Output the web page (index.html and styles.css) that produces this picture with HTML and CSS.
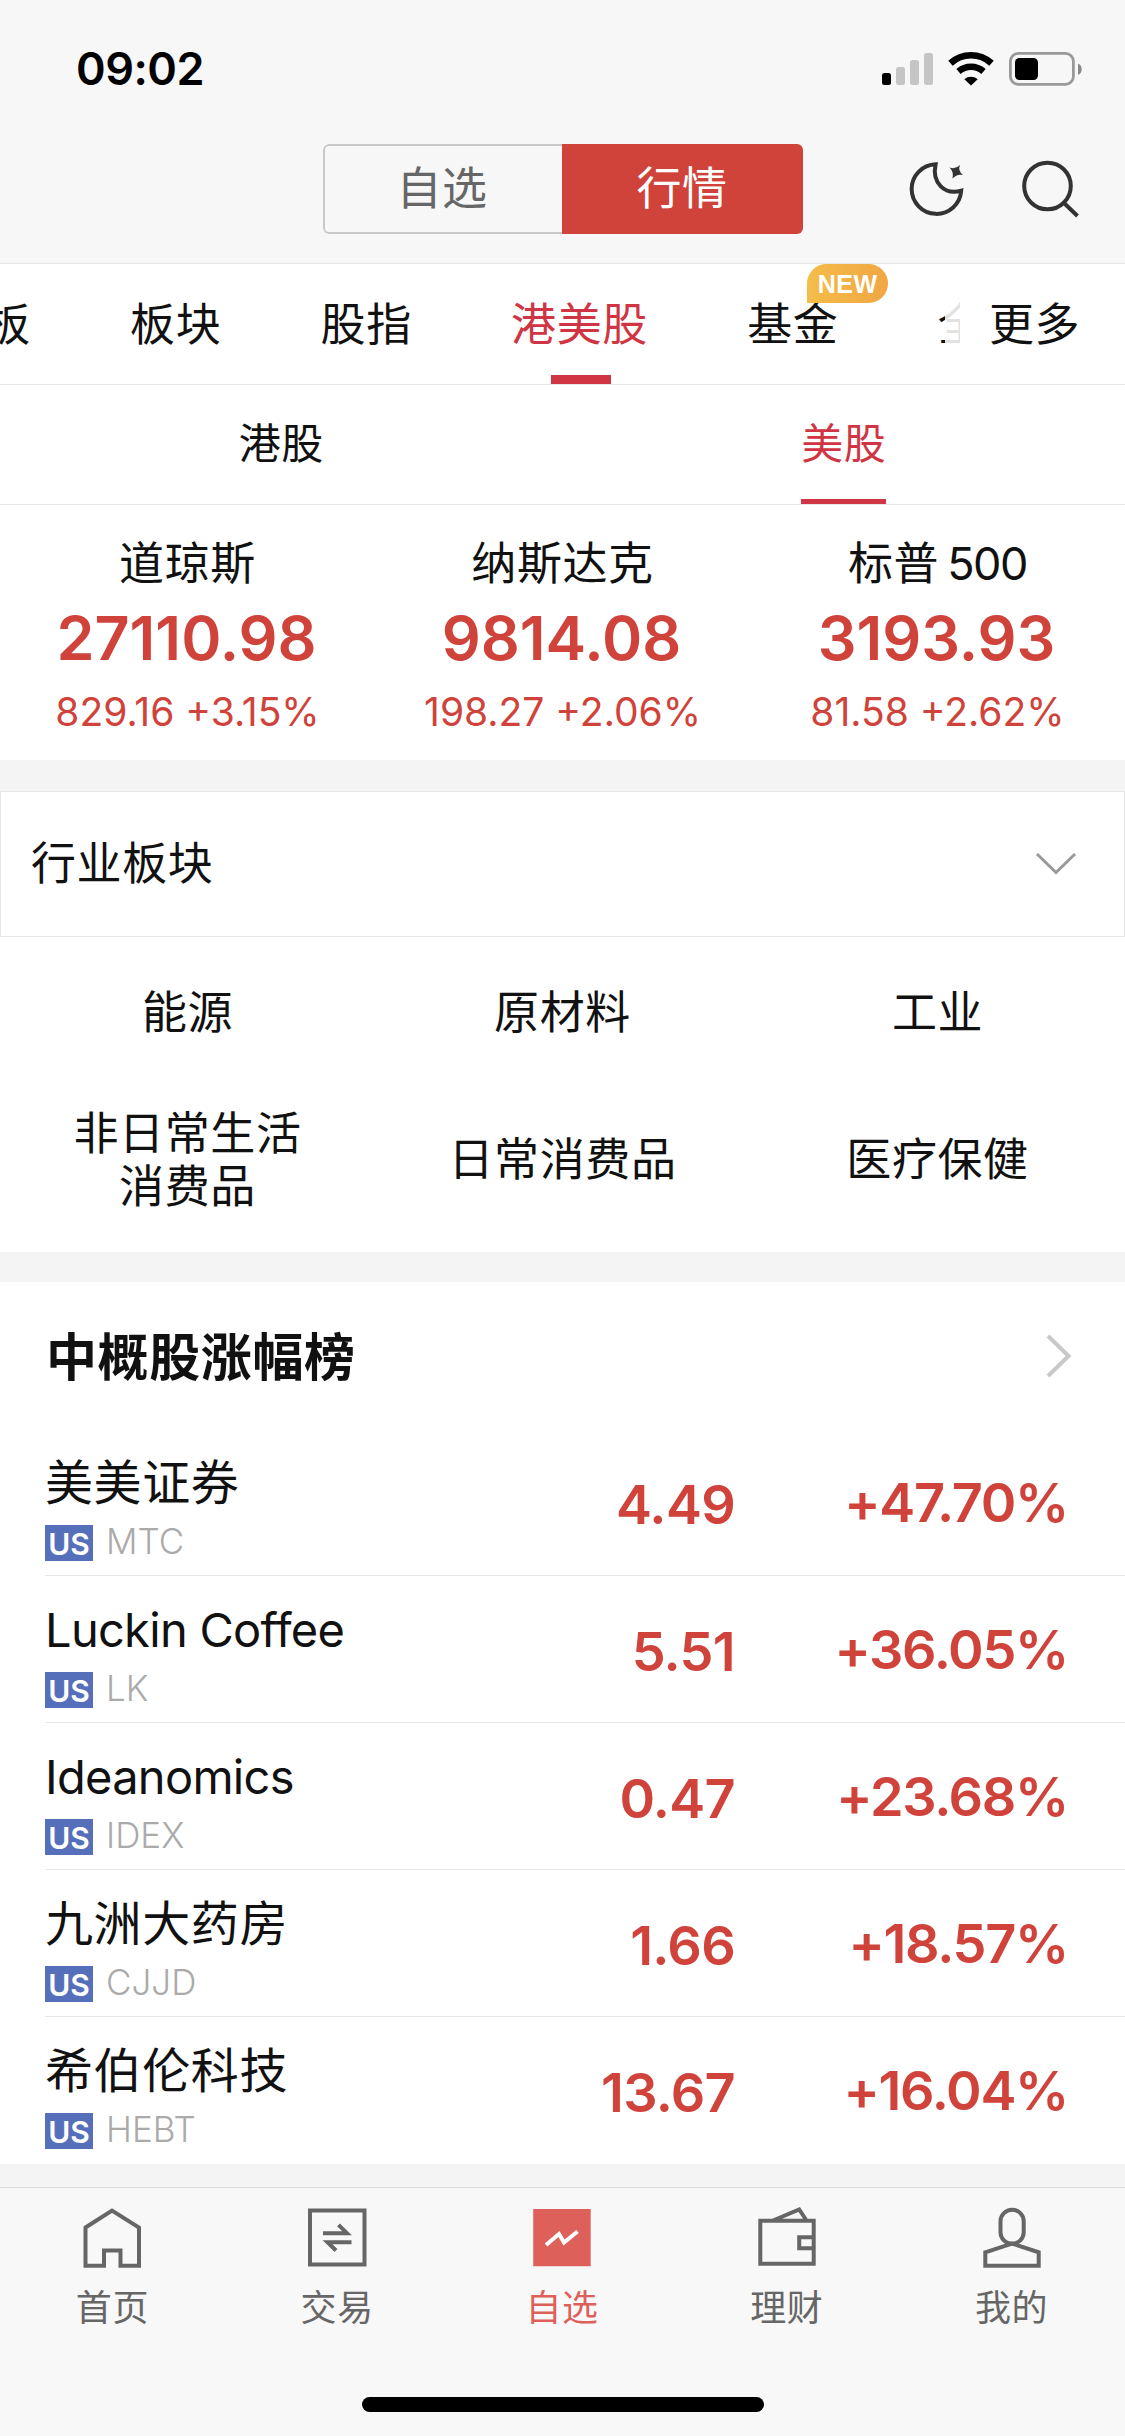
FILE: index.html
```html
<!DOCTYPE html>
<html lang="zh-CN">
<head>
<meta charset="utf-8">
<title>行情</title>
<link rel="stylesheet" href="styles.css">
</head>
<body>
<div class="app">
  <header class="header">
    <div class="status">
      <span class="clock">09:02</span>
      <svg class="status-icons" width="204" height="36" viewBox="0 0 204 36">
        <rect x="2" y="22" width="9" height="12" rx="2.5"/>
        <g fill="#c5c5c5">
          <rect x="16" y="16" width="9" height="18" rx="2.5"/>
          <rect x="30" y="9" width="9" height="25" rx="2.5"/>
          <rect x="44" y="2" width="9" height="32" rx="2.5"/>
        </g>
        <g fill="none" stroke="#000" stroke-width="6.6">
          <path d="M70.500 12.200A30.500 30.500 0 0 1 111.500 12.200"/>
          <path d="M78.500 20.500A19 19 0 0 1 103.500 20.500"/>
        </g>
        <path d="M84.300 28.200A10.500 10.500 0 0 1 97.700 28.200L91 34.500Z"/>
        <rect x="130.400" y="2.400" width="63" height="31" rx="8" fill="none" stroke="#999" stroke-width="2.800"/>
        <rect x="135" y="7" width="23" height="22" rx="4.500"/>
        <path d="M198 12.500c5 2 5 9.500 0 11.500z" fill="#8a8a8a"/>
      </svg>
    </div>
    <div class="toolbar">
      <div class="segment">
        <span class="segment-item">自选</span>
        <span class="segment-item segment-item-active">行情</span>
      </div>
      <div class="tools">
        <svg width="58" height="58" viewBox="0 0 58 58">
          <path d="M26.600 4.300A24.800 24.800 0 1 0 52.200 30.700C36 35.500 22.500 23 26.600 4.300Z" fill="none" stroke="#333" stroke-width="4"/>
          <path d="M40.500 7.500Q46 10 51 5Q48.500 10.500 54 15Q48 13.500 43.500 18.500Q45 12 40.500 7.500Z" fill="#333"/>
        </svg>
        <svg width="58" height="58" viewBox="0 0 58 58">
          <g fill="none" stroke="#333" stroke-width="4">
            <circle cx="26.500" cy="26" r="23.300"/>
            <path d="M43 43L56.500 56"/>
          </g>
        </svg>
      </div>
    </div>
  </header>

  <nav class="tabs">
    <div class="tabs-scroll">
      <span class="tab">中小板</span>
      <span class="tab">板块</span>
      <span class="tab">股指</span>
      <span class="tab tab-active">港美股</span>
      <span class="tab">基金<i class="badge-new">NEW</i></span>
      <span class="tab">全</span>
    </div>
    <span class="tabs-more">更多</span>
  </nav>

  <nav class="subtabs">
    <div class="subtab"><span class="subtab-label">港股</span></div>
    <div class="subtab"><span class="subtab-label subtab-active">美股</span></div>
  </nav>

  <section class="indices">
    <div class="index"><div class="index-name">道琼斯</div><div class="index-value">27110.98</div><div class="index-change">829.16 +3.15%</div></div>
    <div class="index"><div class="index-name">纳斯达克</div><div class="index-value">9814.08</div><div class="index-change">198.27 +2.06%</div></div>
    <div class="index"><div class="index-name">标普<span>500</span></div><div class="index-value">3193.93</div><div class="index-change">81.58 +2.62%</div></div>
  </section>

  <section class="sectors">
    <div class="sectors-head">
      <span>行业板块</span>
      <svg width="44" height="26" viewBox="0 0 44 26"><path d="M3 3L22 21.500L41 3" fill="none" stroke="#999" stroke-width="3"/></svg>
    </div>
    <div class="sectors-grid">
      <span>能源</span><span>原材料</span><span>工业</span>
      <span>非日常生活<br>消费品</span><span>日常消费品</span><span>医疗保健</span>
    </div>
  </section>

  <section class="rank">
    <div class="rank-head">
      <h2 class="rank-title">中概股涨幅榜</h2>
      <svg width="28" height="46" viewBox="0 0 28 46"><path d="M3 3L23.500 23L3 43" fill="none" stroke="#c8c8c8" stroke-width="4"/></svg>
    </div>
    <div class="stock"><div class="stock-id"><div class="stock-name">美美证券</div><div class="stock-code"><b class="market">US</b>MTC</div></div><span class="price">4.49</span><span class="percent">+47.70%</span></div>
    <div class="stock"><div class="stock-id"><div class="stock-name stock-name-latin">Luckin Coffee</div><div class="stock-code"><b class="market">US</b>LK</div></div><span class="price">5.51</span><span class="percent">+36.05%</span></div>
    <div class="stock"><div class="stock-id"><div class="stock-name stock-name-latin">Ideanomics</div><div class="stock-code"><b class="market">US</b>IDEX</div></div><span class="price">0.47</span><span class="percent">+23.68%</span></div>
    <div class="stock"><div class="stock-id"><div class="stock-name">九洲大药房</div><div class="stock-code"><b class="market">US</b>CJJD</div></div><span class="price">1.66</span><span class="percent">+18.57%</span></div>
    <div class="stock"><div class="stock-id"><div class="stock-name">希伯伦科技</div><div class="stock-code"><b class="market">US</b>HEBT</div></div><span class="price">13.67</span><span class="percent">+16.04%</span></div>
  </section>

  <footer class="tabbar">
    <div class="tabbar-items">
      <div class="tabbar-item">
        <svg width="60" height="62" viewBox="0 0 60 62"><path d="M3.500 20.500L30 3.500L57 20.500V58.800H38.500V43.500H22V58.800H3.500Z" fill="none" stroke="#666" stroke-width="4"/></svg>
        <span>首页</span>
      </div>
      <div class="tabbar-item">
        <svg width="60" height="62" viewBox="0 0 60 62"><path d="M3 3.500H57.500V57.500H3ZM16 26.200H40L31.500 17.800M44.500 35.200H20.500L29 43.500" fill="none" stroke="#666" stroke-width="4"/></svg>
        <span>交易</span>
      </div>
      <div class="tabbar-item tabbar-item-active">
        <svg width="60" height="62" viewBox="0 0 60 62"><path d="M1.200 2H58.700V59.300H1.200Z" fill="#de605b"/><path d="M14 38L27 27L32 35.500L45.500 24.500" fill="none" stroke="#fff" stroke-width="4"/></svg>
        <span>自选</span>
      </div>
      <div class="tabbar-item">
        <svg width="60" height="62" viewBox="0 0 60 62"><path d="M3.300 13.800H56.700V56.800H3.300ZM56.700 30.200H42.200V41.200H56.700M16 13.500L42.200 2.500L49.500 13.500" fill="none" stroke="#666" stroke-width="4"/></svg>
        <span>理财</span>
      </div>
      <div class="tabbar-item">
        <svg width="60" height="62" viewBox="0 0 60 62"><rect x="18.500" y="2.800" width="23.200" height="34" rx="11.600" fill="none" stroke="#666" stroke-width="4"/><path d="M3.300 45.300L30 36.500L56.700 45.300V58.800H3.300Z" fill="none" stroke="#666" stroke-width="4"/></svg>
        <span>我的</span>
      </div>
    </div>
    <div class="home-indicator"></div>
  </footer>
</div>
</body>
</html>
```
FILE: styles.css
```css
* { box-sizing: border-box; }

body {
  margin: 0;
  background: #f4f4f4;
  color: #111;
  font-family: Inter, "Noto Sans CJK SC", sans-serif;
  font-size: 45px;
  letter-spacing: 0.6px;
}

svg { display: block; flex: none; }

.app {
  width: 1125px;
  height: 2436px;
  display: flex;
  flex-direction: column;
  overflow: hidden;
}

/* Header */
.header {
  height: 264px;
  background: #f7f7f7;
  border-bottom: 1px solid #e6e6e6;
}
.status {
  height: 144px;
  padding: 0 41px 0 76px;
  display: flex;
  justify-content: space-between;
}
.clock {
  margin-top: 39px;
  line-height: 60px;
  font-weight: 600;
  color: #000;
  letter-spacing: -0.5px;
}
.status-icons { margin-top: 51px; }
.toolbar {
  height: 90px;
  padding: 0 46px 0 323px;
  display: flex;
  justify-content: space-between;
  align-items: center;
}
.segment {
  width: 480px;
  height: 90px;
  display: grid;
  grid-template-columns: 239px 241px;
  border-radius: 6px;
  overflow: hidden;
}
.segment-item {
  padding-right: 3px;
  text-align: center;
  line-height: 86px;
  color: #666;
  border: 2px solid #c8c8ca;
  border-right: 0;
  border-radius: 6px 0 0 6px;
}
.segment-item-active {
  padding-right: 1px;
  line-height: 90px;
  background: #cf433b;
  border: 0;
  border-radius: 0;
  color: #fff;
}
.tools { display: flex; gap: 54px; }

/* Category tabs */
.tabs {
  height: 121px;
  display: flex;
  background: #fff;
  border-bottom: 1px solid #e6e6e6;
}
.tabs-scroll {
  width: 960px;
  display: flex;
  justify-content: flex-start;
  gap: 99.300px;
  overflow: hidden;
  position: relative;
  white-space: nowrap;
}
.tabs-scroll::after {
  content: "";
  position: absolute;
  top: 0;
  right: 0;
  width: 15px;
  height: 100%;
  background: rgba(255, 255, 255, 0.88);
}
.tab {
  flex: none;
  position: relative;
  height: 120px;
  line-height: 122px;
}
.tab:first-child { margin-left: -106px; }
.tab-active { color: #d03543; }
.tab-active::after {
  content: "";
  position: absolute;
  left: 50%;
  bottom: 0;
  width: 60px;
  height: 9px;
  margin-left: -29px;
  background: #d03543;
}
.badge-new {
  position: absolute;
  left: 60px;
  top: 0;
  width: 81px;
  height: 39px;
  border-radius: 20px 20px 20px 0;
  background: linear-gradient(90deg, #f4bd48, #f0a644);
  color: #fff;
  font: bold 25px/40px "Liberation Sans", sans-serif;
  letter-spacing: 0.6px;
  text-align: center;
}
.tabs-more {
  flex: 1;
  padding-left: 29px;
  line-height: 122px;
}

/* Market tabs */
.subtabs {
  height: 120px;
  display: flex;
  background: #fff;
  border-bottom: 1px solid #e6e6e6;
  font-size: 42px;
}
.subtab {
  flex: 1;
  display: flex;
  justify-content: center;
}
.subtab-label { line-height: 117px; height: 119px; }
.subtab-active {
  color: #d03543;
  border-bottom: 5px solid #d03543;
}

/* Indices */
.indices {
  height: 255px;
  padding-top: 23px;
  display: flex;
  background: #fff;
  text-align: center;
}
.index { flex: 1; white-space: nowrap; }
.index-name { line-height: 71px; }
.index-name span { margin-left: 8px; letter-spacing: -1.4px; }
.index-value {
  padding-right: 2px;
  line-height: 79px;
  font-size: 61px;
  font-weight: 600;
  color: #cf433b;
  letter-spacing: 0;
}
.index-change {
  line-height: 68px;
  font-size: 39px;
  color: #cf433b;
  letter-spacing: 0;
}

/* Sectors */
.sectors { margin-top: 31px; background: #fff; }
.sectors-head {
  height: 146px;
  padding: 0 46px 0 30px;
  display: flex;
  align-items: center;
  justify-content: space-between;
  border: 1px solid #e6e6e6;
}
.sectors-head span { line-height: 60px; }
.sectors-grid {
  display: grid;
  grid-template-columns: repeat(3, 1fr);
  grid-auto-rows: 147px;
  align-items: center;
  padding: 2px 0 19px;
  text-align: center;
  line-height: 53px;
}

/* Ranking */
.rank { margin-top: 30px; background: #fff; }
.rank-head {
  height: 147px;
  padding: 0 52px 0 46px;
  display: flex;
  align-items: center;
  justify-content: space-between;
}
.rank-title {
  margin: 0;
  padding-bottom: 3px;
  font-size: 51px;
  font-weight: 600;
  letter-spacing: 0.6px;
}
.stock {
  height: 147px;
  margin-left: 45px;
  padding-right: 57px;
  display: grid;
  grid-template-columns: 1fr 260px 333px;
  border-bottom: 1px solid #e6e6e6;
}
.stock:last-child { border-bottom: 0; }
.stock-name {
  margin-top: 24px;
  line-height: 60px;
  font-size: 48px;
  letter-spacing: 0.6px;
  white-space: nowrap;
}
.stock-name-latin { font-size: 47px; letter-spacing: -0.7px; }
.stock-code {
  margin-top: 12px;
  height: 36px;
  display: flex;
  gap: 13px;
  color: #aaa;
  font-size: 35px;
  font-weight: 300;
  line-height: 33px;
  letter-spacing: 0;
}
.market {
  width: 48px;
  height: 36px;
  background: #566fba;
  color: #fff;
  font-size: 30px;
  font-weight: 600;
  line-height: 38px;
  text-align: center;
}
.price, .percent {
  line-height: 151px;
  font-size: 54px;
  font-weight: 600;
  color: #cf433b;
  text-align: right;
  letter-spacing: -0.7px;
}
.percent { line-height: 147px; letter-spacing: -1.3px; }

/* Tab bar */
.tabbar {
  height: 249px;
  margin-top: auto;
  background: #f8f8f8;
  border-top: 1px solid #dadada;
}
.tabbar-items { display: flex; padding: 19px 1px 0 0; }
.tabbar-item {
  flex: 1;
  display: flex;
  flex-direction: column;
  align-items: center;
  color: #666;
  font-size: 36px;
  line-height: 50px;
}
.tabbar-item span { margin-top: 14px; }
.tabbar-item-active { color: #de605b; }
.home-indicator {
  width: 402px;
  height: 15px;
  margin: 64px auto 0;
  border-radius: 8px;
  background: #000;
}
```
